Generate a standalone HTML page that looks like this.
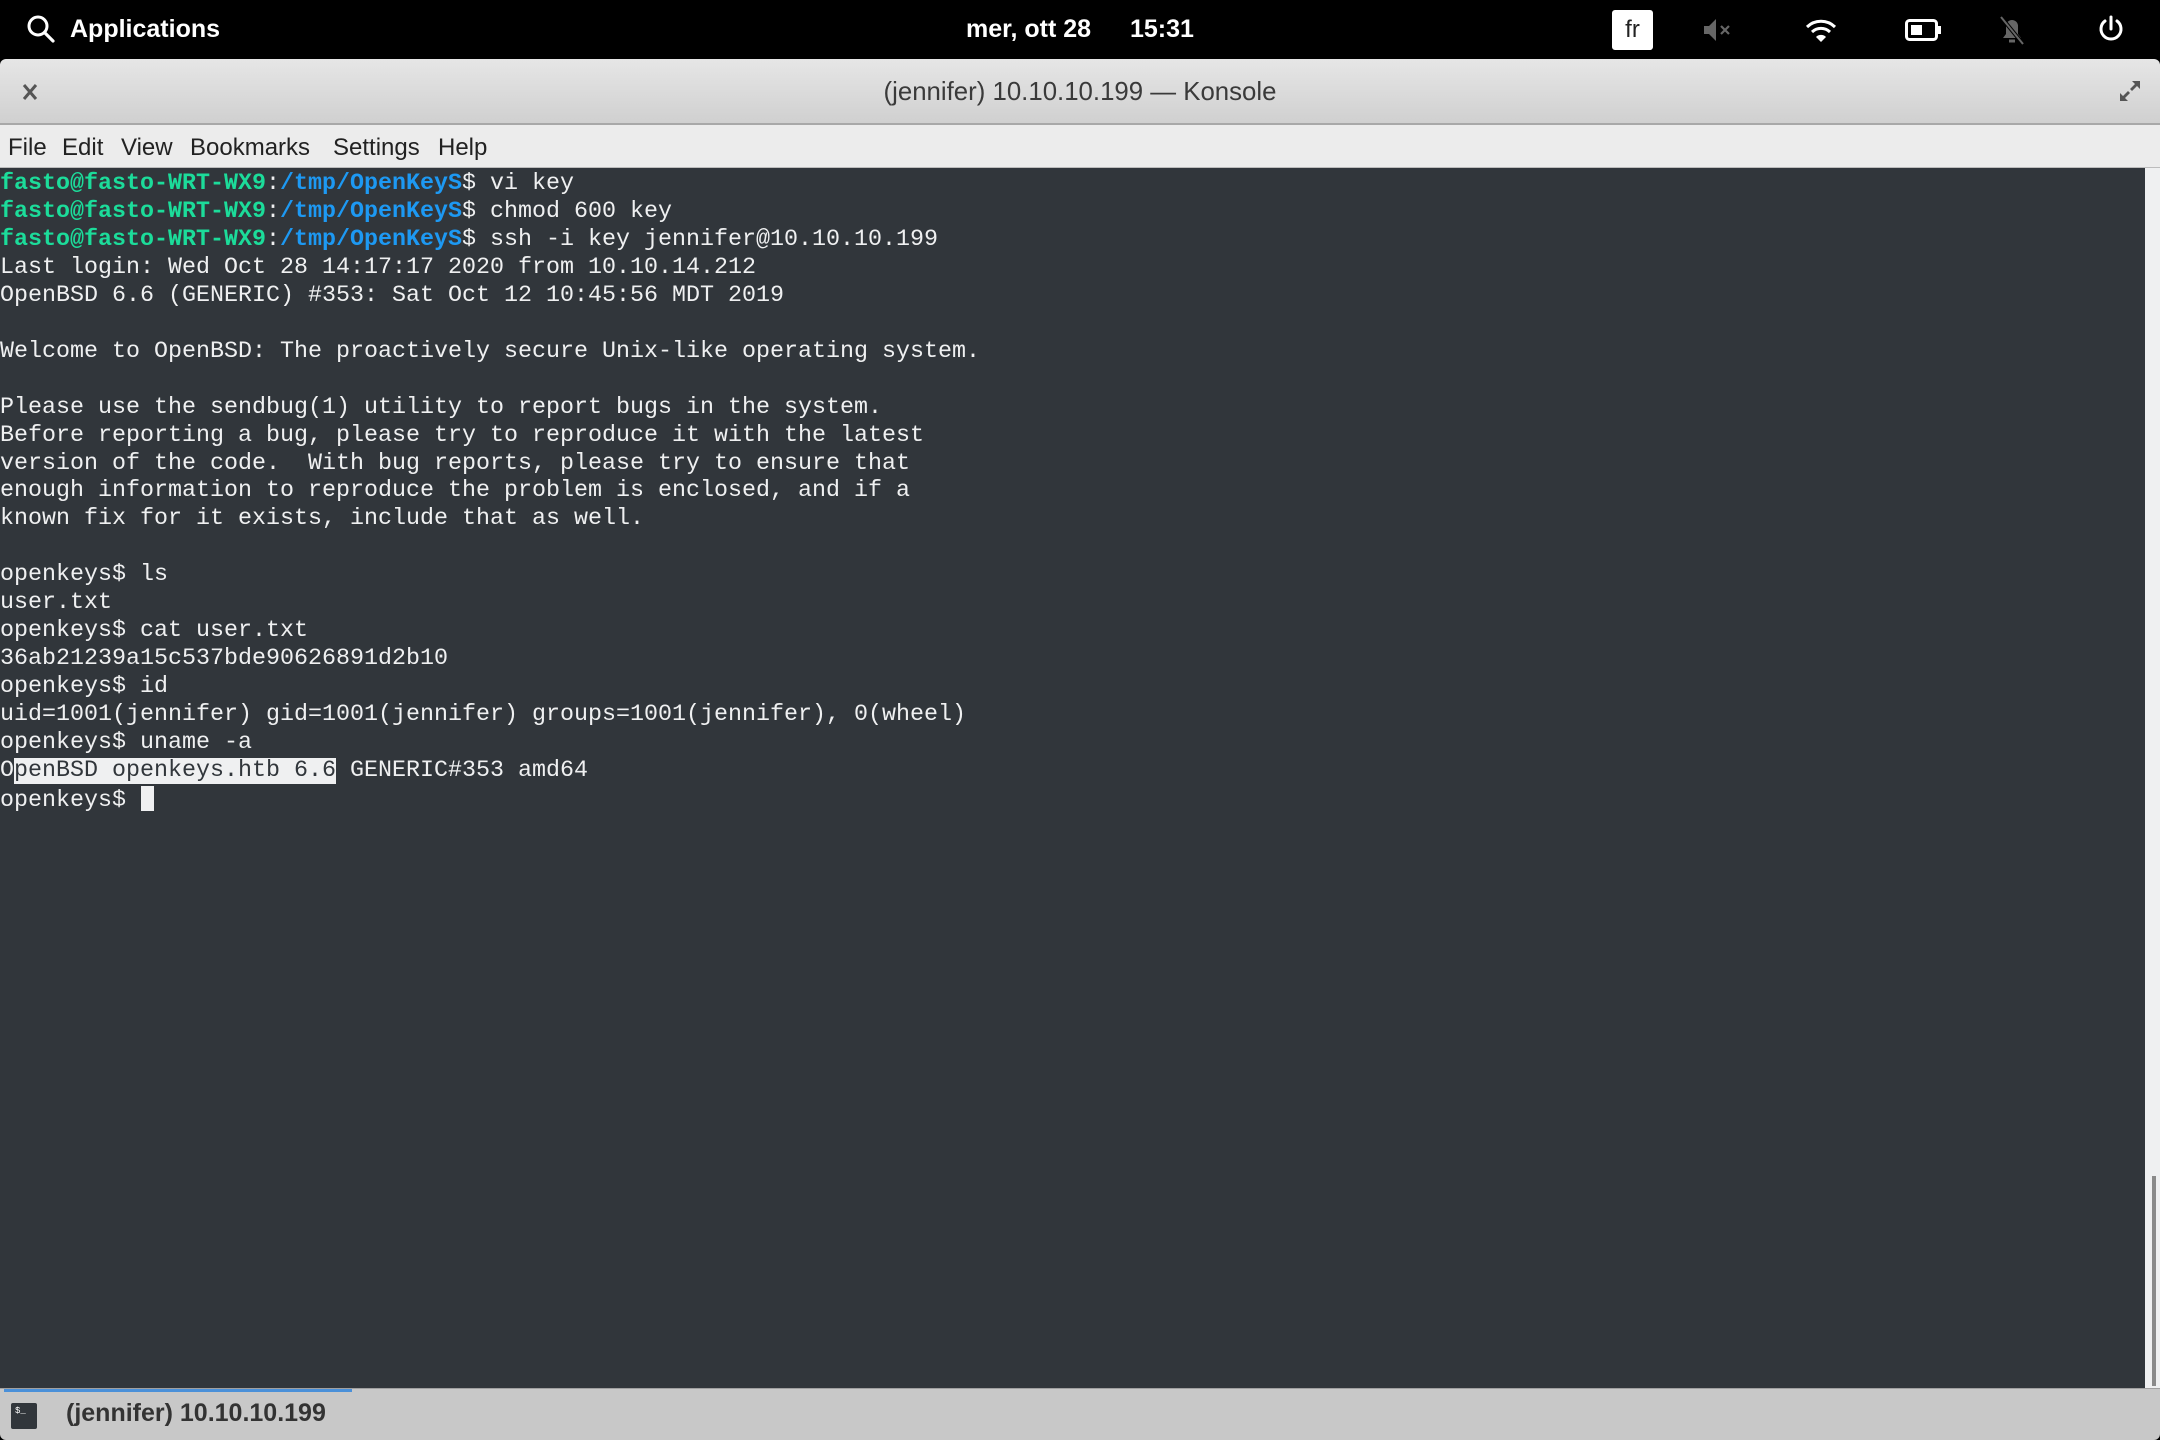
<!DOCTYPE html>
<html><head><meta charset="utf-8"><style>
*{margin:0;padding:0;box-sizing:border-box}
body{width:2160px;height:1440px;overflow:hidden;background:#000;font-family:"Liberation Sans",sans-serif;position:relative}
#top{position:absolute;left:0;top:0;width:2160px;height:59px;background:#000;color:#fff}
#top .t{position:absolute;top:13px;font-size:25px;font-weight:bold;line-height:32px}
#title{position:absolute;left:0;top:59px;width:2160px;height:66px;background:linear-gradient(#e6e6e6,#d0d0d0);border-bottom:2px solid #a8a8a8;border-radius:6px 6px 0 0}
#title .tt{position:absolute;left:0;right:0;top:19px;text-align:center;font-size:25.8px;color:#3a3a3a}
#menu{position:absolute;left:0;top:125px;width:2160px;height:43px;background:#ececec;border-bottom:1px solid #bcbcbc;font-size:24px;color:#222}
#menu span{position:absolute;top:9px}
#term{position:absolute;left:0;top:168px;width:2145px;height:1220px;padding-top:3px;background:#31363b;color:#eff0f1;font-family:"Liberation Mono",monospace;font-size:23.33px;line-height:27.95px;white-space:pre}
.g{color:#1cdc9a;font-weight:bold}.b{color:#1d99f3;font-weight:bold}
.hl{background:#eff0f1;color:#31363b}
.cur{display:inline-block;width:13px;height:25px;background:#eff0f1;vertical-align:-5px;margin-left:1px}
#sb{position:absolute;left:2145px;top:168px;width:15px;height:1220px;background:#eff0f1}
#sb div{position:absolute;left:7px;top:1008px;width:4px;height:210px;background:#8a8a8a}
#task{position:absolute;left:0;top:1388px;width:2160px;height:52px;background:#c8c8c8;border-top:1px solid #a0a0a0;border-radius:0 0 6px 6px}
#task .bl{position:absolute;left:4px;top:0;width:348px;height:3px;background:#4a90d9}
</style></head><body>
<div id="top">
<svg style="position:absolute;left:26px;top:14px" width="30" height="30" viewBox="0 0 30 30"><circle cx="12" cy="12" r="9" fill="none" stroke="#fff" stroke-width="3"/><path d="M18.5 18.5L27 27" stroke="#fff" stroke-width="3.2" stroke-linecap="round"/></svg>
<div class="t" style="left:70px">Applications</div>
<div class="t" style="left:966px">mer, ott 28</div>
<div class="t" style="left:1130px">15:31</div>
<div style="position:absolute;left:1612px;top:10px;width:41px;height:40px;background:#fff;border-radius:3px;color:#222;font-size:24px;text-align:center;line-height:40px">fr</div>
<svg style="position:absolute;left:1703px;top:17px" width="32" height="26" viewBox="0 0 32 26"><path d="M1 9h5l7-7v22l-7-7H1z" fill="#666"/><path d="M18 9l8 8M26 9l-8 8" stroke="#666" stroke-width="2.2"/></svg>
<svg style="position:absolute;left:1805px;top:18px" width="32" height="26" viewBox="0 0 32 26"><path d="M2 9a20 20 0 0 1 28 0" fill="none" stroke="#fff" stroke-width="3"/><path d="M7 14a13 13 0 0 1 18 0" fill="none" stroke="#fff" stroke-width="3"/><path d="M11 19l5 5 5-5a7 7 0 0 0-10 0z" fill="#fff"/></svg>
<svg style="position:absolute;left:1905px;top:18px" width="38" height="24" viewBox="0 0 38 24"><rect x="1.5" y="2.5" width="30" height="19" rx="3" fill="none" stroke="#fff" stroke-width="3"/><rect x="6" y="7" width="11" height="10" fill="#fff"/><rect x="32" y="8" width="4" height="8" fill="#fff"/></svg>
<svg style="position:absolute;left:1998px;top:14px" width="28" height="32" viewBox="0 0 28 32"><path d="M5 24h18l-3-4V12a6 6 0 0 0-12 0v8z" fill="#666"/><path d="M11 27h6" stroke="#666" stroke-width="3"/><path d="M3 3l22 27" stroke="#000" stroke-width="4"/><path d="M3 3l22 27" stroke="#666" stroke-width="2"/></svg>
<svg style="position:absolute;left:2096px;top:14px" width="30" height="30" viewBox="0 0 30 30"><path d="M9 7a10 10 0 1 0 12 0" fill="none" stroke="#fff" stroke-width="3" stroke-linecap="round"/><path d="M15 3v12" stroke="#fff" stroke-width="3" stroke-linecap="round"/></svg>
</div>
<div id="title">
<svg style="position:absolute;left:22px;top:24px" width="16" height="18" viewBox="0 0 16 18"><path d="M2 2l12 14M14 2L2 16" stroke="#555" stroke-width="3"/></svg>
<div class="tt">(jennifer) 10.10.10.199 — Konsole</div>
<svg style="position:absolute;left:2118px;top:20px" width="24" height="24" viewBox="0 0 24 24"><path d="M14 2h8v8l-3-3-5 5-2-2 5-5zM10 22H2v-8l3 3 5-5 2 2-5 5z" fill="#555"/></svg>
</div>
<div id="menu"><span style="left:8px">File</span><span style="left:62px">Edit</span><span style="left:121px">View</span><span style="left:190px">Bookmarks</span><span style="left:333px">Settings</span><span style="left:438px">Help</span></div>
<div id="term"><span class="g">fasto@fasto-WRT-WX9</span>:<span class="b">/tmp/OpenKeyS</span>$ vi key
<span class="g">fasto@fasto-WRT-WX9</span>:<span class="b">/tmp/OpenKeyS</span>$ chmod 600 key
<span class="g">fasto@fasto-WRT-WX9</span>:<span class="b">/tmp/OpenKeyS</span>$ ssh -i key jennifer@10.10.10.199
Last login: Wed Oct 28 14:17:17 2020 from 10.10.14.212
OpenBSD 6.6 (GENERIC) #353: Sat Oct 12 10:45:56 MDT 2019

Welcome to OpenBSD: The proactively secure Unix-like operating system.

Please use the sendbug(1) utility to report bugs in the system.
Before reporting a bug, please try to reproduce it with the latest
version of the code.  With bug reports, please try to ensure that
enough information to reproduce the problem is enclosed, and if a
known fix for it exists, include that as well.

openkeys$ ls
user.txt
openkeys$ cat user.txt
36ab21239a15c537bde90626891d2b10
openkeys$ id
uid=1001(jennifer) gid=1001(jennifer) groups=1001(jennifer), 0(wheel)
openkeys$ uname -a
O<span class="hl">penBSD openkeys.htb 6.6</span> GENERIC#353 amd64
openkeys$ <span class="cur"></span></div>
<div id="sb"><div></div></div>
<div id="task"><div class="bl"></div>
<div style="position:absolute;left:11px;top:14px;width:26px;height:26px;background:#31363b;border-radius:2px;color:#fff;font-size:9px;font-family:'Liberation Mono',monospace;padding:3px 0 0 4px">$_</div>
<div style="position:absolute;left:66px;top:10px;font-size:25px;font-weight:bold;color:#333">(jennifer) 10.10.10.199</div>
</div>
</body></html>
